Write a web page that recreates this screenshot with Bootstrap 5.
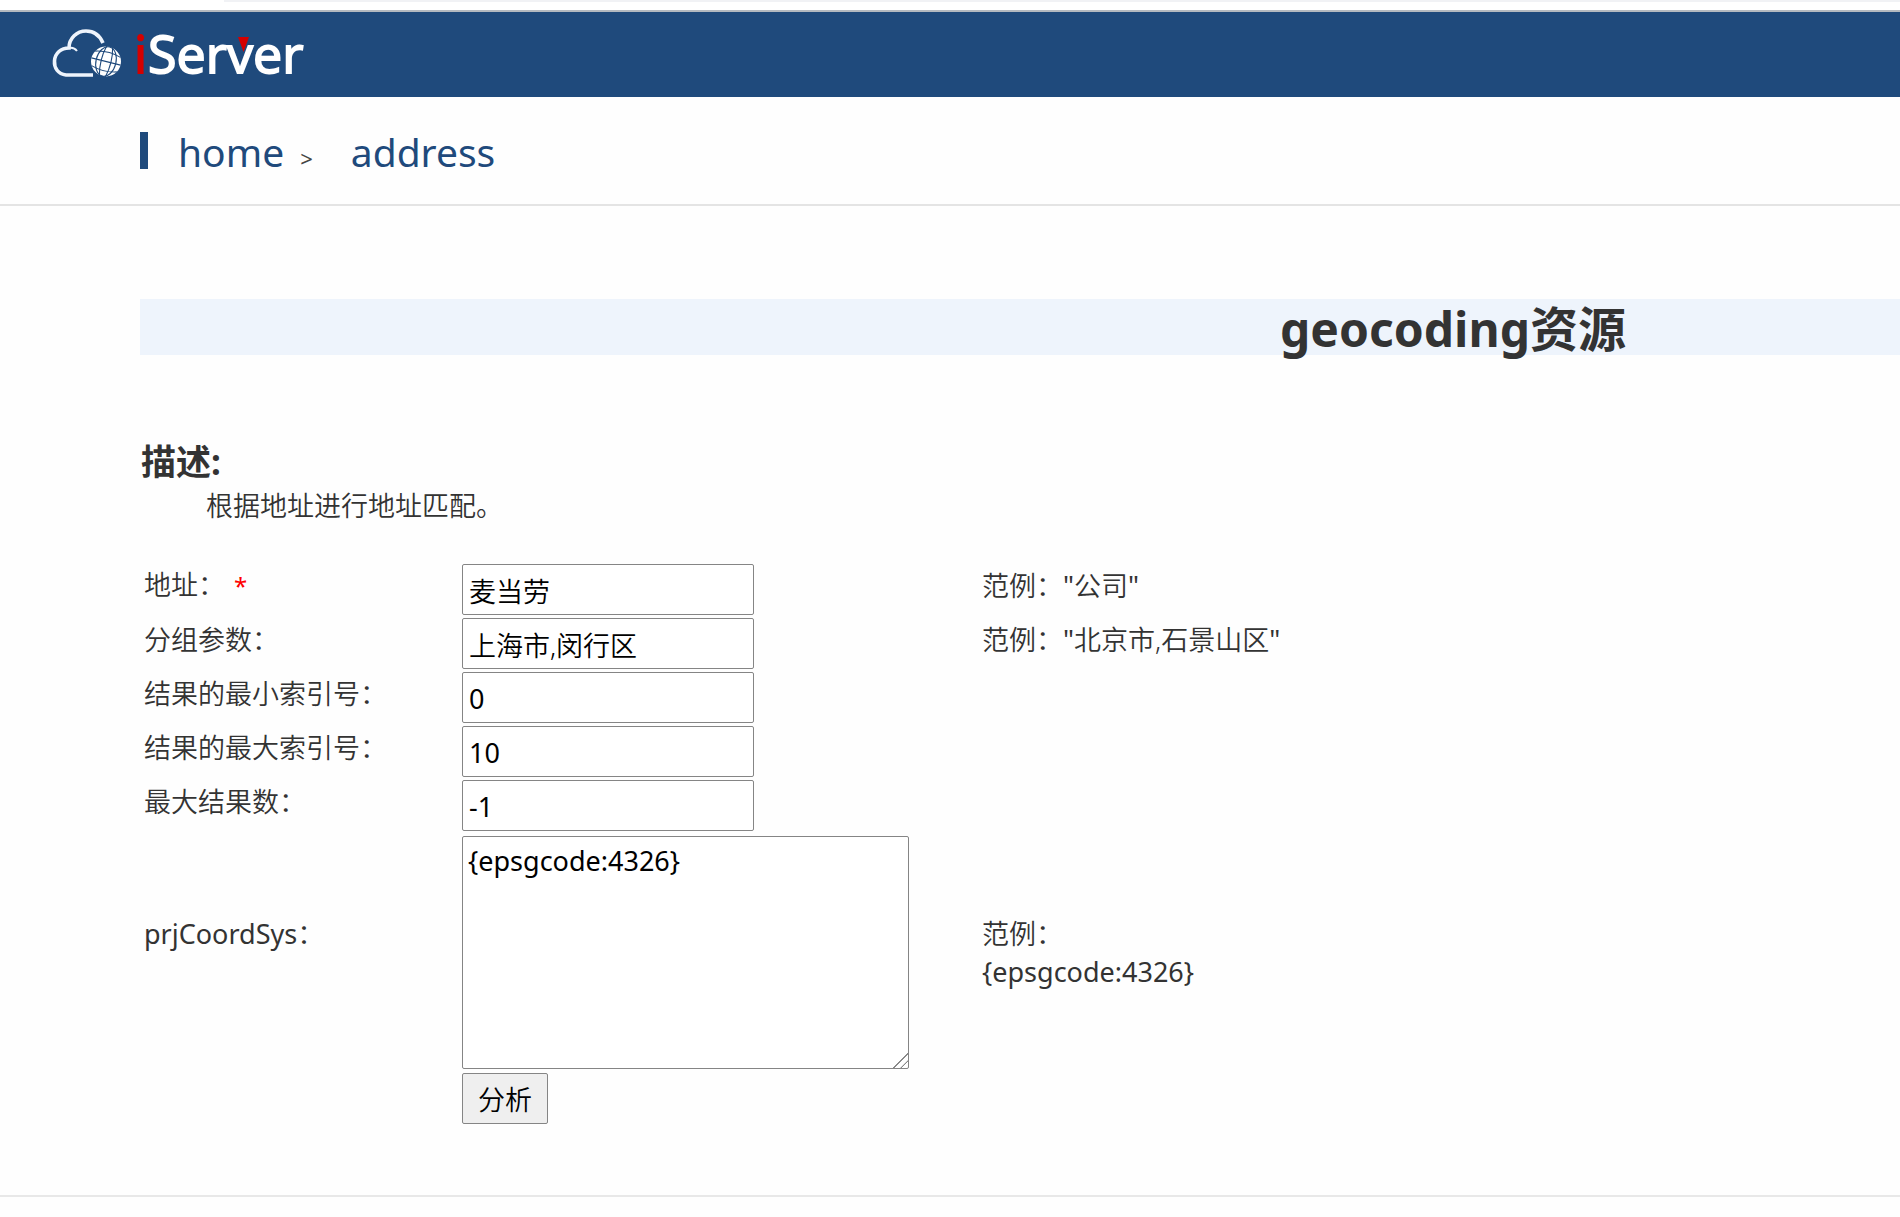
<!DOCTYPE html>
<html lang="zh-CN">
<head>
<meta charset="utf-8">
<meta name="viewport" content="width=device-width, initial-scale=1">
<title>geocoding资源</title>
<link href="https://cdn.jsdelivr.net/npm/bootstrap@5.3.0/dist/css/bootstrap.min.css" rel="stylesheet">
<script src="https://cdn.jsdelivr.net/npm/bootstrap@5.3.0/dist/js/bootstrap.bundle.min.js" defer></script>
<style>
body { font-family: "Noto Sans", "Noto Sans CJK SC", sans-serif; font-size: 27px; font-weight: 350; line-height: 38px; color: #333; background: #fefefe; }
.top-strip { height: 12px; background: #fff; border-bottom: 2px solid #b4bac0; }
.top-strip div { height: 2px; margin-left: 224px; background: #f1f2f5; }
.site-header { height: 85px; padding: 0 50px; background: #1f4a7c; }
.crumbs { height: 109px; padding: 0 140px; border-bottom: 2px solid #e4e4e4; }
.crumbs .tick { width: 8px; height: 37px; background: #1f4a7c; margin-right: 30px; }
.crumbs .trail { padding-top: 2px; }
.crumbs a { font-size: 39px; font-weight: 400; line-height: 56px; color: #1f4a7c; text-decoration: none; }
.crumbs .sep { font-size: 22px; font-weight: 400; color: #444; margin: 0 38px 0 16px; }
.content { padding: 93px 0 0 140px; }
.res-title { height: 56px; margin: 0; padding-left: 866px; background: #eef4fc; font-size: 48px; line-height: 60px; font-weight: 700; white-space: nowrap; }
.desc-title { font-size: 35px; line-height: 44px; font-weight: 700; margin: 85px 0 0 1px; }
.desc-text { margin: 3px 0 39px 66px; }
.api-form { padding-left: 4px; }
.lbl-col { width: 318px; flex: none; }
.fld-col { width: 520px; flex: none; }
.line-row { height: 51px; }
.line-row .lbl-col, .line-row .ex-col { padding-bottom: 8px; }
.fld { font-family: inherit; font-size: 27px; font-weight: inherit; color: #000; background: #fff; border: 1px solid #858585; border-radius: 2px; }
input.fld { width: 292px; height: 51px; padding: 1px 6px 0; }
textarea.fld { display: block; width: 447px; height: 233px; padding: 5px 5px; resize: both; }
textarea.fld::-webkit-resizer { background: linear-gradient(135deg, transparent 49%, #8a8a8a 50%, #8a8a8a 54%, transparent 55%, transparent 73%, #8a8a8a 74%, #8a8a8a 78%, transparent 79%); }
button.fld { width: 86px; height: 51px; padding: 3px 0 0; background: #efefef; }
.latin, .latin.fld { font-weight: 400; }
.rows { gap: 3px; }
.area-row .lbl-col { padding-bottom: 38px; }
.area-row { padding: 2px 0 1px; }
.req { color: #f00; font-size: 24px; font-weight: 400; margin-left: 2px; }
.end-rule { margin-top: 71px; border-top: 2px solid #e8e8e8; }
</style>
</head>
<body>
<div class="top-strip"><div></div></div>
<header class="site-header d-flex align-items-center">
  <a href="#" aria-label="iServer">
    <svg class="d-block" width="260" height="85" viewBox="50 12 260 85">
      <g fill="none" stroke="#eef4fc" stroke-width="3.6">
        <path d="M93 75H66C58 74 54 68 54.500 61C55 53 61 48 69 48C69 38 77 31 86 31C94 31 100 36 103 43"/>
        <path d="M69 48Q74 47 77 51" stroke-width="2"/>
      </g>
      <circle cx="106" cy="61.500" r="15" fill="#fff"/>
      <g fill="none" stroke="#1f4a7c" stroke-width="1.100" transform="rotate(14 106 61.500)">
        <path d="M103 46Q99 61 103 77M109 46Q113 61 109 77M91 61.500H121M93 54Q106 50 119 54M93 69Q106 73 119 69"/>
        <ellipse cx="106" cy="61.500" rx="10" ry="15"/>
      </g>
      <g font-family="Open Sans, sans-serif" font-size="52" font-weight="500" stroke-width="1.800">
        <text x="134" y="73" fill="#d40000" stroke="#d40000">i</text>
        <text x="148" y="73" fill="#fff" stroke="#fff">Server</text>
      </g>
      <path d="M238 37H249L243.500 52Z" fill="#d40000"/>
    </svg>
  </a>
</header>
<nav class="crumbs d-flex align-items-center" aria-label="breadcrumb">
  <span class="tick"></span>
  <div class="trail d-flex align-items-baseline"><a href="#">home</a><span class="sep">&gt;</span><a href="#">address</a></div>
</nav>
<main class="content">
  <h1 class="res-title text-center">geocoding资源</h1>
  <h2 class="desc-title">描述:</h2>
  <p class="desc-text">根据地址进行地址匹配。</p>
  <form class="api-form rows d-flex flex-column">
    <div class="line-row d-flex align-items-center">
      <label class="lbl-col" for="address">地址： <span class="req">*</span></label>
      <div class="fld-col"><input class="fld" id="address" type="text" value="麦当劳"></div>
      <div class="ex-col">范例：<span class="latin">"</span>公司<span class="latin">"</span></div>
    </div>
    <div class="line-row d-flex align-items-center">
      <label class="lbl-col" for="filters">分组参数：</label>
      <div class="fld-col"><input class="fld" id="filters" type="text" value="上海市,闵行区"></div>
      <div class="ex-col">范例：<span class="latin">"</span>北京市,石景山区<span class="latin">"</span></div>
    </div>
    <div class="line-row d-flex align-items-center">
      <label class="lbl-col" for="from">结果的最小索引号：</label>
      <div class="fld-col"><input class="fld latin" id="from" type="text" value="0"></div>
    </div>
    <div class="line-row d-flex align-items-center">
      <label class="lbl-col" for="to">结果的最大索引号：</label>
      <div class="fld-col"><input class="fld latin" id="to" type="text" value="10"></div>
    </div>
    <div class="line-row d-flex align-items-center">
      <label class="lbl-col" for="max">最大结果数：</label>
      <div class="fld-col"><input class="fld latin" id="max" type="text" value="-1"></div>
    </div>
    <div class="area-row d-flex align-items-center">
      <label class="lbl-col" for="prj"><span class="latin">prjCoordSys</span>：</label>
      <div class="fld-col"><textarea class="fld latin" id="prj">{epsgcode:4326}</textarea></div>
      <div class="ex-col">范例：<br><span class="latin">{epsgcode:4326}</span></div>
    </div>
    <div class="d-flex">
      <div class="lbl-col"></div>
      <button class="fld" type="button">分析</button>
    </div>
  </form>
</main>
<div class="end-rule"></div>
</body>
</html>
